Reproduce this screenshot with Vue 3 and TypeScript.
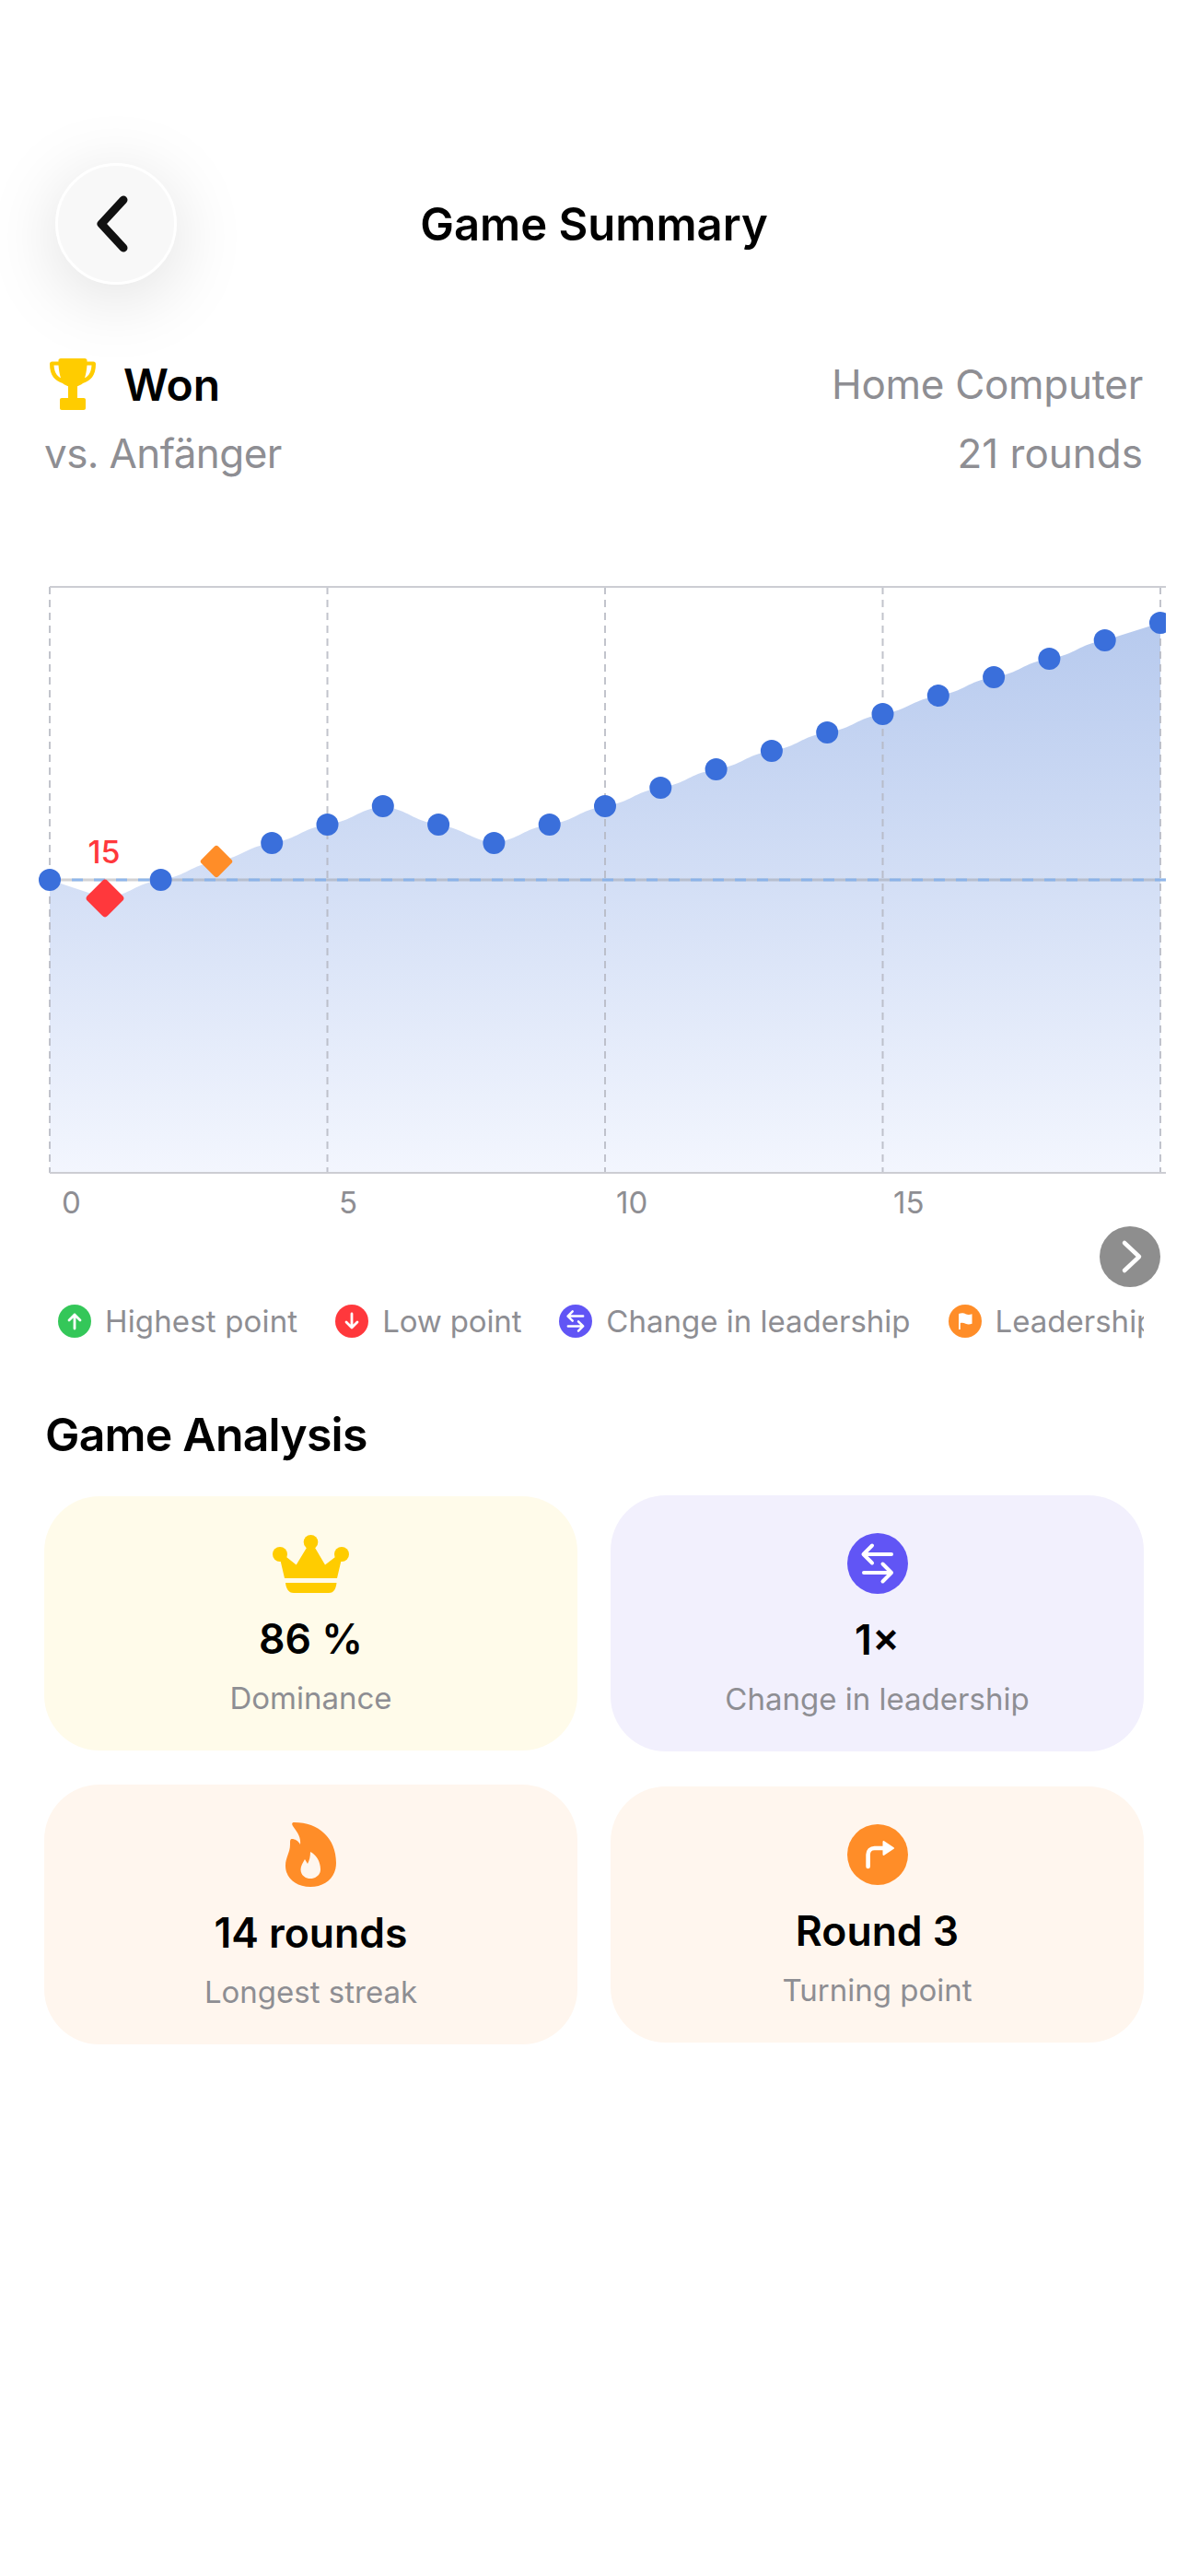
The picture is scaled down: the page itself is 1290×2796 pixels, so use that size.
<script setup lang="ts">
const step = 60.3
const ys = [955, 975, 955, 935, 915, 895, 875, 895, 915, 895, 875, 855, 835, 815, 795, 775, 755, 735, 715, 695, 676]
const points = ys.map((y, i) => ({ x: 54 + i * step, y }))
const plain = points.filter((_, i) => i !== 1 && i !== 3)

function curve(): string {
  let d = `M${points[0].x} ${points[0].y}`
  for (let i = 1; i < points.length; i++) {
    const a = points[i - 1]
    const b = points[i]
    const mx = (a.x + b.x) / 2
    const dy = b.y - a.y
    const smooth = i > 1 && i < points.length - 1
    d += smooth ? ` C${mx} ${a.y + dy * 0.25} ${mx} ${a.y + dy * 0.75} ${b.x} ${b.y}` : ` L${b.x} ${b.y}`
  }
  return d
}
const line = curve()
const area = `${line} L${points[20].x} 1273 L54 1273 Z`
const ticks = [54, 355.5, 657, 958.5, 1260]
const axis = [
  { t: '0', x: 67 },
  { t: '5', x: 368 },
  { t: '10', x: 669 },
  { t: '15', x: 970 },
]
</script>

<template>
  <div class="page">
    <header class="nav">
      <button class="back" aria-label="Back">
        <svg width="38" height="62" viewBox="0 0 38 62"><path d="M31 5 7 31l24 26" fill="none" stroke="#111" stroke-width="9" stroke-linecap="round" stroke-linejoin="round" /></svg>
      </button>
      <h1>Game Summary</h1>
    </header>

    <section class="result">
      <div class="row">
        <div class="won">
          <svg width="50" height="56" viewBox="0 0 50 56"><path fill="#ffcc00" d="M12 0h26c1.500 0 2.500 1 2.500 2v1.500h7C49 3.500 50 4.500 50 6c0 6.500-1.500 11-4 14.500-2.500 3-5.500 5-10 6.500-1.500 1.200-3.500 2.500-6 3.300V43h7c1.200 0 2 .8 2 2v9c0 1.200-.8 2-2 2H13c-1.200 0-2-.8-2-2v-9c0-1.200.8-2 2-2h7V30.300c-2.500-.8-4.500-2.100-6-3.300-4.500-1.500-7.500-3.500-10-6.500C1.500 17 0 12.500 0 6c0-1.500 1-2.500 2.500-2.500h7V2c0-1 1-2 2.500-2Zm-7.500 7.500c.3 4.500 1.300 7.500 3 10 1 1.500 2.500 2.700 4.500 3.700-1.300-3.700-2-8.200-2.500-13.700Zm41 0h-5c-.5 5.500-1.200 10-2.500 13.700 2-1 3.500-2.200 4.500-3.700 1.700-2.500 2.700-5.500 3-10Z" /></svg>
          <span>Won</span>
        </div>
        <span class="muted tight">Home Computer</span>
      </div>
      <div class="row second">
        <span class="muted tighter">vs. Anfänger</span>
        <span class="muted">21 rounds</span>
      </div>
    </section>

    <div class="chart">
      <svg width="1290" height="760" viewBox="0 630 1290 760">
        <defs>
          <linearGradient id="fill" gradientUnits="userSpaceOnUse" x1="0" y1="676" x2="0" y2="1273">
            <stop offset="0" stop-color="#b7caee" />
            <stop offset="1" stop-color="#f3f6fe" />
          </linearGradient>
          <clipPath id="clip"><rect x="0" y="630" width="1266" height="650" /></clipPath>
        </defs>
        <g clip-path="url(#clip)">
          <path :d="area" fill="url(#fill)" />
          <line v-for="t in ticks" :key="t" :x1="t" :x2="t" y1="637" y2="1273" stroke="#b4b6c0" stroke-width="2" stroke-dasharray="8 6" opacity=".8" />
          <line x1="54" x2="1266" y1="955" y2="955" stroke="#8e8e93" stroke-opacity=".4" stroke-width="3" />
          <line x1="54" x2="1266" y1="955" y2="955" stroke="#7fb0f0" stroke-opacity=".8" stroke-width="3" stroke-dasharray="12 12" />
          <circle v-for="p in plain" :key="p.x" :cx="p.x" :cy="p.y" r="12" fill="#3a6fdb" />
          <rect x="98.500" y="959.500" width="31" height="31" rx="4" transform="rotate(45 114 975)" fill="#ff383c" />
          <rect x="222" y="922" width="26" height="26" rx="3" transform="rotate(45 235 935)" fill="#ff8d28" />
          <text x="113" y="937" text-anchor="middle" class="low">15</text>
        </g>
        <line x1="54" x2="1266" y1="637" y2="637" stroke="#cccdd3" stroke-width="2" />
        <line x1="54" x2="1266" y1="1273" y2="1273" stroke="#cccdd3" stroke-width="2" />
        <text v-for="a in axis" :key="a.t" :x="a.x" y="1317" class="tick">{{ a.t }}</text>
      </svg>
      <button class="next" aria-label="Next">
        <svg width="26" height="38" viewBox="0 0 26 38"><path d="M5 4l16 15L5 34" fill="none" stroke="#fff" stroke-width="4.500" stroke-linecap="round" stroke-linejoin="round" /></svg>
      </button>
    </div>

    <div class="legend">
      <div class="item high">
        <span class="dot green"><svg width="22" height="22" viewBox="0 0 22 22"><path d="M11 19V4M5 10l6-6 6 6" fill="none" stroke="#fff" stroke-width="2.800" stroke-linecap="round" stroke-linejoin="round" /></svg></span>
        <span>Highest point</span>
      </div>
      <div class="item lowp">
        <span class="dot red"><svg width="22" height="22" viewBox="0 0 22 22"><path d="M11 3v15M5 12l6 6 6-6" fill="none" stroke="#fff" stroke-width="2.800" stroke-linecap="round" stroke-linejoin="round" /></svg></span>
        <span>Low point</span>
      </div>
      <div class="item">
        <span class="dot purple"><svg width="36" height="36" viewBox="0 0 66 66"><path d="M48 23H18M27 13.500 17.500 23l9.500 9.500M18 43h30M38.500 33.500 48 43l-9.500 9.500" fill="none" stroke="#fff" stroke-width="4.500" stroke-linecap="round" stroke-linejoin="round" /></svg></span>
        <span>Change in leadership</span>
      </div>
      <div class="item">
        <span class="dot orange"><svg width="22" height="22" viewBox="0 0 22 22"><path fill="#fff" d="M4 3c3-1.300 6-.7 7.500.2 2 1 4.500 1 7 0v10.600c-2.500 1-5 1-7 0-2-1-4.500-1.300-5.700-.6V20H4Z" /></svg></span>
        <span>Leadership</span>
      </div>
    </div>

    <h2>Game Analysis</h2>

    <div class="cards">
      <div class="col left">
        <div class="card yellow first">
          <svg class="crown" width="83" height="63" viewBox="0 0 83 63">
            <g fill="#ffcc00">
              <circle cx="41.500" cy="7.800" r="7.800" />
              <circle cx="8" cy="21" r="8" />
              <circle cx="75" cy="21" r="8" />
              <path d="M8.300 27 15 24l10.700 8.500L37.500 13h8l11.500 19.500L68 24l6.700 3L70 47H13ZM14 52h55.500c-.7 6-2.500 11-8.500 11H23c-6 0-8.300-5-9-11Z" />
            </g>
          </svg>
          <strong>86 %</strong>
          <span>Dominance</span>
        </div>
        <div class="card peach third">
          <svg class="flame" width="55" height="70" viewBox="0 0 55 70"><path fill="#ff8d28" fill-rule="evenodd" d="M9.500 0C36 0 55 17 55 44 55 60 43 70 27 70 11 70 0 60 0 47 0 38 5 33 5 24c0-4 0-6 2-6 3 0 7 2 9 6 1-9-4-14-8-20C6.500 1.500 7 0 9.500 0ZM27 32c6 3 11 10 11 19 0 6-5 10-11 10s-10.500-4-10.500-10c0-4 2.500-7 4.500-11l3 5c2-4 3-8 3-13Z" /></svg>
          <strong>14 rounds</strong>
          <span>Longest streak</span>
        </div>
      </div>
      <div class="col">
        <div class="card lilac second-card">
          <span class="big purple"><svg width="66" height="66" viewBox="0 0 66 66"><path d="M48 23H18M27 13.500 17.500 23l9.500 9.500M18 43h30M38.500 33.500 48 43l-9.500 9.500" fill="none" stroke="#fff" stroke-width="4" stroke-linecap="round" stroke-linejoin="round" /></svg></span>
          <strong>1×</strong>
          <span>Change in leadership</span>
        </div>
        <div class="card peach fourth">
          <span class="big orange"><svg width="66" height="66" viewBox="0 0 66 66"><path d="M22.600 46V33c0-4 3-7 7-7H41" fill="none" stroke="#fff" stroke-width="4.600" stroke-linecap="round" stroke-linejoin="round" /><path d="M39.500 19 50 26l-10.500 7Z" fill="#fff" stroke="#fff" stroke-width="2" stroke-linejoin="round" /></svg></span>
          <strong>Round 3</strong>
          <span>Turning point</span>
        </div>
      </div>
    </div>
  </div>
</template>

<style scoped>
.page {
  width: 1290px;
  height: 2796px;
  background: #fff;
  font-family: Inter, "Noto Sans", sans-serif;
  overflow: hidden;
}
.nav {
  padding: 177px 60px 0;
  display: grid;
  grid-template-columns: 1fr auto 1fr;
  align-items: center;
}
.back {
  width: 132px;
  height: 132px;
  border-radius: 50%;
  background: #f8f8f8;
  border: 3px solid #fff;
  box-shadow: 0 14px 80px rgba(0, 0, 0, 0.13);
  display: flex;
  align-items: center;
  justify-content: center;
  padding: 0 8px 0 0;
  box-sizing: border-box;
}
h1 {
  margin: 0;
  padding-top: 2px;
  text-align: center;
  font-size: 49px;
  line-height: 56px;
  font-weight: 600;
  color: #000;
}
.result {
  margin-top: 77px;
  padding: 0 49px 0 48px;
}
.row {
  display: flex;
  justify-content: space-between;
  align-items: center;
  height: 62px;
}
.row.second {
  margin-top: 13px;
}
.won {
  display: flex;
  align-items: center;
  gap: 30px;
  padding-left: 6px;
  font-size: 48px;
  font-weight: 600;
  color: #000;
}
.muted {
  font-size: 44px;
  color: #8e8e93;
  font-weight: 400;
}
.tight {
  letter-spacing: -0.3px;
}
.tighter {
  letter-spacing: -0.6px;
}
.chart {
  height: 760px;
  margin-top: 107px;
  position: relative;
}
.chart svg {
  display: block;
}
.low {
  font: 500 34px Inter, sans-serif;
  fill: #ff383c;
}
.tick {
  font: 400 33px Inter, sans-serif;
  fill: #8e8e93;
}
.next {
  position: absolute;
  left: 1194px;
  top: 701px;
  width: 66px;
  height: 66px;
  border-radius: 50%;
  border: 0;
  padding: 0 0 0 3px;
  background: #8e8e8e;
  display: flex;
  align-items: center;
  justify-content: center;
}
.legend {
  margin: 22px 0 0 63px;
  width: 1179px;
  height: 44px;
  display: flex;
  gap: 41px;
  overflow: hidden;
  font-size: 33px;
  line-height: 44px;
  color: #8e8e93;
  white-space: nowrap;
}
.item {
  display: flex;
  align-items: center;
  gap: 15px;
  flex: none;
}
.item.high {
  letter-spacing: 0.15px;
}
.item.lowp {
  letter-spacing: -0.15px;
}
.dot {
  width: 36px;
  height: 36px;
  border-radius: 50%;
  display: flex;
  align-items: center;
  justify-content: center;
}
.green { background: #34c759; }
.red { background: #ff383c; }
.purple { background: #6155f5; }
.orange { background: #ff8d28; }
h2 {
  margin: 71px 0 0 49px;
  font-size: 50px;
  line-height: 60px;
  letter-spacing: -0.8px;
  font-weight: 600;
  color: #000;
}
.cards {
  margin: 36px 0 0 48px;
  display: flex;
  gap: 36px;
}
.col {
  width: 579px;
  display: flex;
  flex-direction: column;
}
.col.left {
  padding-top: 1px;
  gap: 37px;
}
.card {
  border-radius: 60px;
  display: flex;
  flex-direction: column;
  align-items: center;
  box-sizing: border-box;
}
.first { height: 276px; padding-top: 42px; }
.second-card { height: 278px; padding-top: 41px; }
.third { height: 282px; padding-top: 41px; }
.fourth { height: 278px; padding-top: 41px; margin-top: 38px; }
.yellow { background: #fffbea; }
.lilac { background: #f2f0fd; }
.peach { background: #fff6ee; }
.crown, .flame { display: block; }
.big {
  width: 66px;
  height: 66px;
  border-radius: 50%;
  display: flex;
  align-items: center;
  justify-content: center;
}
.card strong {
  margin-top: 24px;
  font-size: 44.5px;
  line-height: 52px;
  font-weight: 600;
  color: #000;
}
.card > span:last-child {
  margin-top: 17px;
  font-size: 33px;
  line-height: 42px;
  color: #8e8e93;
}
</style>
<style>
html, body { margin: 0; background: #fff; }
</style>
